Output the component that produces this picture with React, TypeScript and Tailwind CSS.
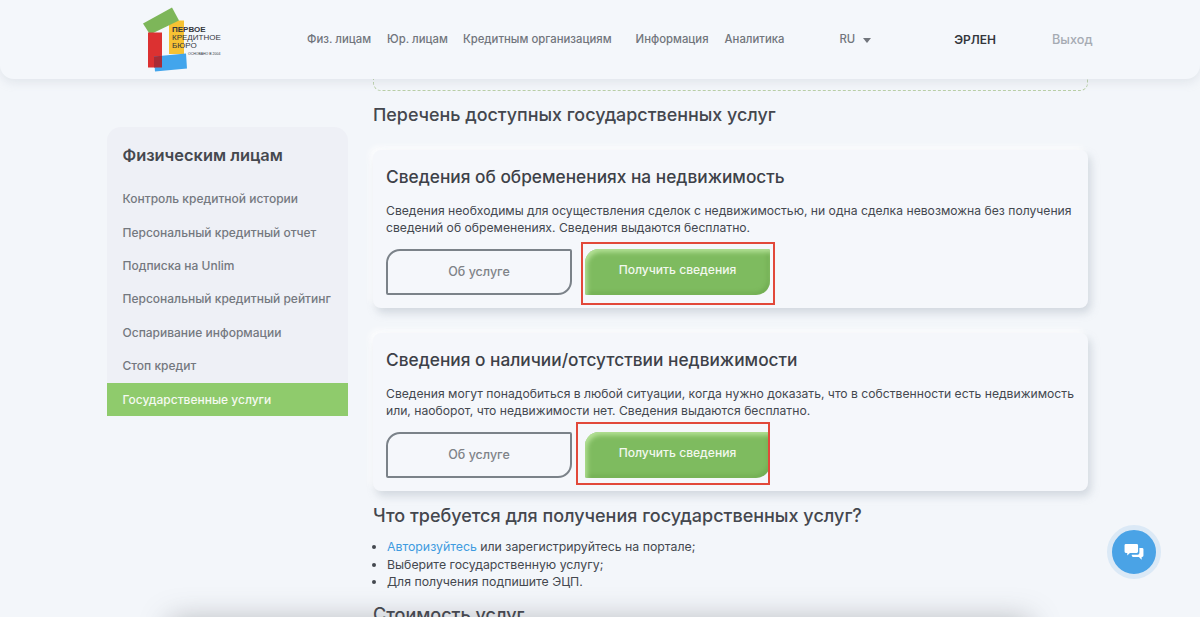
import React from "react";

const menu = [
  "Контроль кредитной истории",
  "Персональный кредитный отчет",
  "Подписка на Unlim",
  "Персональный кредитный рейтинг",
  "Оспаривание информации",
  "Стоп кредит",
];

const nav = [
  { label: "Физ. лицам", cls: "ml-[84px]" },
  { label: "Юр. лицам", cls: "ml-[16px]" },
  { label: "Кредитным организациям", cls: "ml-[15px]" },
  { label: "Информация", cls: "ml-[24px]" },
  { label: "Аналитика", cls: "ml-[16px]" },
];

function Logo() {
  return (
    <div className="relative h-[72px] w-[82px] shrink-0">
      <svg width="82" height="72" viewBox="0 0 82 72" className="absolute left-0 top-0">
        <polygon points="28,16.500 43,16.500 43,50 28,50" fill="#f6c233" />
        <polygon points="2,19.500 31,3.500 38,16.500 9,30.500" fill="#7db659" />
        <polygon points="7,28.500 21,28.500 21,63.500 7,63.500" fill="#dc3131" />
        <polygon points="13,52.500 45,49.500 46,64.500 14,67.500" fill="#42a5ec" />
        <polygon points="13,52.500 21,51.800 21,63.500 13,63.500" fill="#a92b35" />
      </svg>
      <div className="absolute left-[31px] top-[22.500px] font-['Liberation_Sans',sans-serif] text-[8px] leading-[8px] text-[#33363c]">
        <div className="font-bold">ПЕРВОЕ</div>
        <div>КРЕДИТНОЕ</div>
        <div>БЮРО</div>
      </div>
      <div className="absolute left-[47px] top-[48.500px] whitespace-nowrap font-['Liberation_Sans',sans-serif] text-[3.500px] leading-[4px] text-[#33363c]">
        ОСНОВАНО В 2004
      </div>
    </div>
  );
}

function ServiceCard({ title, lines, frame }: { title: string; lines: string[]; frame: string }) {
  return (
    <section className="h-[158px] rounded-lg bg-[#f5f7fb] px-[13px] pt-[15px] shadow-[3px_5px_8px_rgba(150,160,175,0.35),-3px_-3px_6px_rgba(255,255,255,0.9)]">
      <h3 className="text-[17.300px] leading-[24px] font-medium text-[#3d4148]">{title}</h3>
      <div className="mt-[13px] whitespace-nowrap text-[12.170px] leading-[17px] text-[#44484f]">
        {lines.map((l) => (
          <p key={l}>{l}</p>
        ))}
      </div>
      <div className="mt-[13px] flex gap-[13px]">
        <button className="h-[46px] w-[186px] rounded-tl-[14px] rounded-br-[14px] rounded-tr-[2px] rounded-bl-[2px] border-2 border-[#7b8289] bg-[#f5f7fb] text-[12.500px] font-medium text-[#7f8388]">
          Об услуге
        </button>
        <div className="relative">
          <button className="h-[46px] w-[185px] rounded-tl-[14px] rounded-br-[14px] rounded-tr-[2px] rounded-bl-[2px] bg-[#7ebb5f] pb-[3px] text-[12.100px] font-medium text-[#f2f8ee] shadow-[inset_2px_3px_5px_rgba(190,232,160,0.9),inset_-2px_-2px_4px_rgba(90,150,60,0.45)]">
            Получить сведения
          </button>
          <div className={`absolute h-[63px] w-[194px] border-2 border-[#e2483a] ${frame}`}></div>
        </div>
      </div>
    </section>
  );
}

function ChatIcon() {
  return (
    <svg width="20" height="18" viewBox="0 0 22 20" fill="#fff">
      <path d="M2 1h12a1.500 1.500 0 0 1 1.500 1.500v7a1.500 1.500 0 0 1-1.500 1.500H6.500l-3 3v-3H2A1.500 1.500 0 0 1 .5 9.500v-7A1.500 1.500 0 0 1 2 1z" />
      <path d="M17 5.500h3a1.500 1.500 0 0 1 1.500 1.500v7a1.500 1.500 0 0 1-1.500 1.500h-.5v3l-3-3H10a1.500 1.500 0 0 1-1.500-1.500v-1H15a2 2 0 0 0 2-2z" />
    </svg>
  );
}

export default function App() {
  return (
    <div className="relative h-[617px] w-[1200px] overflow-hidden bg-[#f3f6fa] font-['Inter',sans-serif]">
      {/* Шапка */}
      <header className="relative z-10 flex h-[79px] items-center rounded-b-[14px] bg-[#f4f7fb] pl-[141px] shadow-[0_4px_10px_rgba(170,178,190,0.22)]">
        <Logo />
        {nav.map((n) => (
          <a key={n.label} className={`${n.cls} mt-[1px] whitespace-nowrap text-[11.350px] font-medium text-[#71757c]`}>
            {n.label}
          </a>
        ))}
        <span className="ml-[55px] mt-[1px] text-[11.350px] font-medium text-[#71757c]">RU</span>
        <span className="ml-[8px] mt-[2px] h-0 w-0 border-x-[4.500px] border-t-[5px] border-x-transparent border-t-[#71757c]"></span>
        <span className="ml-[83px] mt-[1px] text-[12px] font-semibold text-[#33363c]">ЭРЛЕН</span>
        <span className="ml-[56px] mt-[1px] text-[12.700px] font-medium text-[#a6abb3]">Выход</span>
      </header>

      <main className="flex pl-[107px]">
        {/* Боковое меню */}
        <aside className="mt-[48px] h-[289px] w-[241px] shrink-0 rounded-t-[14px] bg-[#eef0f6]">
          <h2 className="pl-[15.500px] pt-[17px] text-[16.400px] leading-[22px] font-semibold text-[#45484f]">Физическим лицам</h2>
          <ul className="mt-[16.500px]">
            {menu.map((m) => (
              <li key={m} className="flex h-[33.400px] items-center pl-[15.500px] text-[12px] font-medium text-[#74787f]">
                {m}
              </li>
            ))}
            <li className="flex h-[33.400px] items-center bg-[#8fcb6c] pl-[15.500px] text-[12px] font-medium text-[#f5f9f1]">
              Государственные услуги
            </li>
          </ul>
        </aside>

        <div className="ml-[25px] w-[715px]">
          <div className="h-[12px] w-full rounded-b-lg border-x border-b border-dashed border-[#b9cfa6]"></div>
          <h2 className="mt-[12px] text-[17.900px] leading-[24px] font-medium text-[#44474e]">Перечень доступных государственных услуг</h2>
          <div className="mt-[23px] flex flex-col gap-[25px]">
            <ServiceCard
              title="Сведения об обременениях на недвижимость"
              lines={[
                "Сведения необходимы для осуществления сделок с недвижимостью, ни одна сделка невозможна без получения",
                "сведений об обременениях. Сведения выдаются бесплатно.",
              ]}
              frame="left-[-4px] top-[-7.500px]"
            />
            <ServiceCard
              title="Сведения о наличии/отсутствии недвижимости"
              lines={[
                "Сведения могут понадобиться в любой ситуации, когда нужно доказать, что в собственности есть недвижимость",
                "или, наоборот, что недвижимости нет. Сведения выдаются бесплатно.",
              ]}
              frame="left-[-9px] top-[-10px]"
            />
          </div>
          <h2 className="mt-[13px] text-[18px] leading-[24px] font-medium text-[#44474e]">Что требуется для получения государственных услуг?</h2>
          <ul className="mt-[10px] list-disc pl-[14px] text-[12.300px] leading-[17.500px] text-[#44484f]">
            <li>
              <span className="text-[#3e9be0]">Авторизуйтесь</span> или зарегистрируйтесь на портале;
            </li>
            <li>Выберите государственную услугу;</li>
            <li>Для получения подпишите ЭЦП.</li>
          </ul>
          <h2 className="mt-[12px] text-[18px] leading-[24px] font-medium text-[#44474e]">Стоимость услуг</h2>
        </div>
      </main>

      {/* Тень нижней панели */}
      <div className="absolute left-[190px] top-[640px] h-[10px] w-[820px] bg-[#55585e] shadow-[0_0_30px_20px_rgba(85,88,94,0.4)]"></div>

      {/* Чат */}
      <button className="absolute left-[1107px] top-[525px] flex h-[54px] w-[54px] items-center justify-center rounded-full border-[5px] border-[#dbe9f6] bg-[#4aa3e6]">
        <ChatIcon />
      </button>
    </div>
  );
}
